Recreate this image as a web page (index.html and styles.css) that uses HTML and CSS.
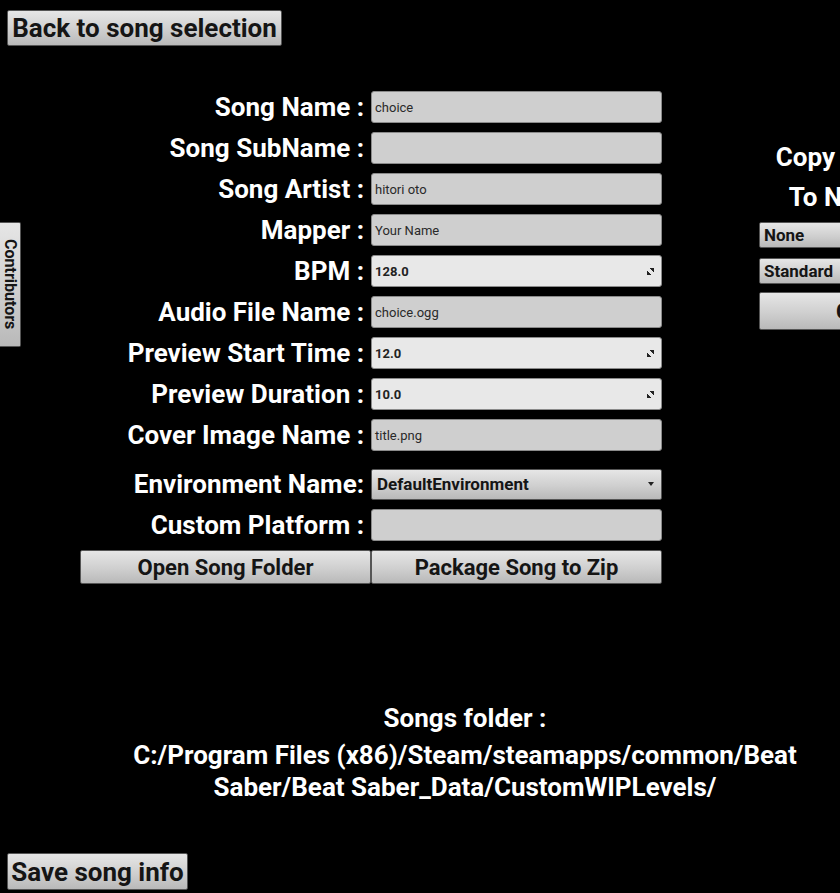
FILE: index.html
```html
<!DOCTYPE html>
<html lang="en">
<head>
    <meta charset="UTF-8">
    <meta name="viewport" content="width=device-width, initial-scale=1.0">
    <title>Song Info</title>
    <link rel="stylesheet" href="styles.css">
</head>
<body>
    <div class="top">
        <button class="btn back">Back to song selection</button>
    </div>

    <button class="btn contributors">Contributors</button>

    <div class="workspace">
        <div class="form">
            <label>Song Name :</label>
            <div class="field">choice</div>

            <label>Song SubName :</label>
            <div class="field"></div>

            <label>Song Artist :</label>
            <div class="field">hitori oto</div>

            <label>Mapper :</label>
            <div class="field">Your Name</div>

            <label>BPM :</label>
            <div class="field number">128.0 <span class="spin"></span></div>

            <label>Audio File Name :</label>
            <div class="field">choice.ogg</div>

            <label>Preview Start Time :</label>
            <div class="field number">12.0 <span class="spin"></span></div>

            <label>Preview Duration :</label>
            <div class="field number">10.0 <span class="spin"></span></div>

            <label>Cover Image Name :</label>
            <div class="field">title.png</div>

            <label class="env">Environment Name:</label>
            <div class="btn dropdown env">DefaultEnvironment <span class="caret"></span></div>

            <label>Custom Platform :</label>
            <div class="field"></div>

            <div class="actions">
                <button class="btn wide">Open Song Folder</button>
                <button class="btn wide">Package Song to Zip</button>
            </div>
        </div>

        <div class="copy-panel">
            <p>Copy Difficulty</p>
            <p>To New Map</p>
            <div class="btn select">None</div>
            <div class="btn select">Standard</div>
            <button class="btn copy">Copy</button>
        </div>
    </div>

    <div class="folder">
        <p>Songs folder :</p>
        <p>C:/Program Files (x86)/Steam/steamapps/common/Beat Saber/Beat Saber_Data/CustomWIPLevels/</p>
    </div>

    <div class="bottom">
        <button class="btn save">Save song info</button>
    </div>
</body>
</html>
```

FILE: styles.css
```css
* {
    margin: 0;
    box-sizing: border-box;
}

body {
    background: black;
    color: white;
    font-family: Roboto, 'Liberation Sans', sans-serif;
    font-weight: 700;
    width: 840px;
    height: 893px;
    overflow: hidden;
    position: relative;
    display: flex;
    flex-direction: column;
}

.btn {
    font-family: Roboto, 'Liberation Sans', sans-serif;
    font-weight: 700;
    color: #151515;
    background: linear-gradient(#e6e6e6, #cfcfcf 55%, #b9b9b9);
    border: 1px solid #555;
    border-radius: 2px;
    padding: 0;
    white-space: nowrap;
}

.top {
    padding: 10px 0 0 7px;
}

.back {
    width: 275px;
    height: 36px;
    font-size: 26px;
}

.contributors {
    position: absolute;
    left: 0;
    top: 222px;
    width: 21px;
    height: 125px;
    writing-mode: vertical-rl;
    font-size: 16px;
    border-left: none;
    border-radius: 0 2px 2px 0;
}

.workspace {
    display: flex;
    align-items: flex-start;
}

.form {
    margin-top: 45px;
    display: grid;
    grid-template-columns: 364px 291px;
    column-gap: 7px;
    row-gap: 9px;
    align-items: center;
}

.form label {
    text-align: right;
    font-size: 26px;
    line-height: 32px;
    white-space: nowrap;
}

.form .env {
    margin-top: 8px;
}

.field {
    height: 32px;
    background: #cfcfcf;
    border: 1px solid #8a8a8a;
    border-radius: 3px;
    color: #2a2a2a;
    font-weight: 400;
    font-size: 13px;
    display: flex;
    align-items: center;
    justify-content: space-between;
    padding: 0 7px 0 3px;
}

.field.number {
    background: #e8e8e8;
    font-weight: 700;
    color: #222;
}

.spin {
    width: 7px;
    height: 7px;
    background: linear-gradient(45deg, #222 30%, transparent 30%, transparent 70%, #222 70%);
}

.dropdown {
    height: 31px;
    font-size: 17px;
    text-align: left;
    display: flex;
    align-items: center;
    justify-content: space-between;
    padding: 0 7px 0 5px;
}

.caret {
    border: 3px solid transparent;
    border-top: 4px solid #222;
    border-bottom: none;
}

.actions {
    grid-column: 1 / 3;
    display: flex;
    justify-content: flex-end;
    height: 34px;
}

.wide {
    width: 291px;
    height: 34px;
    font-size: 22px;
}

.copy-panel {
    margin: 91px 0 0 97px;
    width: 204px;
    flex-shrink: 0;
    text-align: center;
}

.copy-panel p {
    font-size: 26px;
    line-height: 40px;
}

.select {
    margin-top: 5px;
    height: 26px;
    font-size: 17px;
    text-align: left;
    padding: 2px 4px 0;
}

.select + .select {
    margin-top: 10px;
}

.copy {
    margin-top: 8px;
    width: 100%;
    height: 38px;
    font-size: 22px;
}

.folder {
    margin: 118px auto 0;
    padding-left: 90px;
    width: 790px;
    text-align: center;
    font-size: 26px;
    line-height: 32px;
}

.folder p:first-child {
    margin-bottom: 5px;
}

.bottom {
    margin-top: auto;
    padding: 0 0 3px 7px;
}

.save {
    width: 181px;
    height: 37px;
    font-size: 26px;
}
```
